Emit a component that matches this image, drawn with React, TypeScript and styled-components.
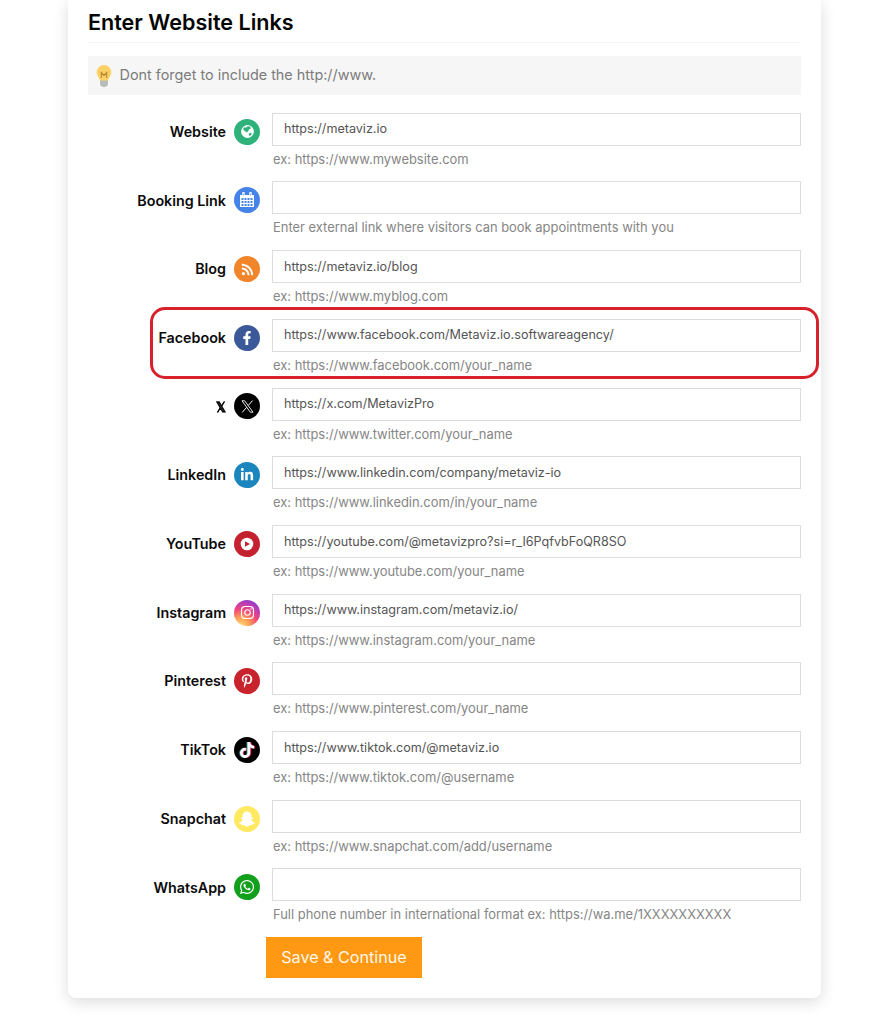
import React from 'react';
import styled, { createGlobalStyle } from 'styled-components';
import { FaRss, FaFacebookF, FaLinkedinIn, FaPinterestP, FaTiktok, FaSnapchatGhost, FaWhatsapp, FaInstagram } from 'react-icons/fa';

const GlobalStyle = createGlobalStyle`
  * { box-sizing: border-box; }
  body { margin: 0; background: #fff; font-family: Inter, "Liberation Sans", sans-serif; height: 1024px; overflow: hidden; }
`;

const Card = styled.main`
  width: 753px;
  height: 997.5px;
  margin-left: 68px;
  padding: 0 20px;
  background: #fff;
  border-radius: 0 0 8px 8px;
  box-shadow: 0 4px 15px rgba(0, 0, 0, 0.14);
`;

const Title = styled.h1`
  margin: 0;
  height: 43px;
  padding-top: 8px;
  border-bottom: 1px solid #f3f4f5;
  font-size: 21.55px;
  line-height: 28px;
  font-weight: 600;
  color: #050505;
`;

const Notice = styled.div`
  display: flex;
  align-items: center;
  gap: 7.5px;
  height: 39px;
  margin: 13px 0 17.8px;
  padding-left: 8px;
  background: #f6f6f6;
  color: #7c7c7c;
  font-size: 14.4px;
  line-height: 17px;

  span { margin-top: -2px; }
`;

const Row = styled.div`
  position: relative;
  display: grid;
  grid-template-columns: 138px 26px 529px;
  column-gap: 8px;
  height: 68.7px;
`;

const Label = styled.label`
  padding-top: 9.2px;
  text-align: right;
  white-space: nowrap;
  font-size: 14.3px;
  line-height: 20px;
  font-weight: 600;
  color: #0b0b0b;
`;

const Badge = styled.span<{ $bg: string }>`
  display: flex;
  align-items: center;
  justify-content: center;
  width: 26px;
  height: 26px;
  margin-top: 5.9px;
  border-radius: 50%;
  background: ${(p) => p.$bg};
  color: #fff;
`;

const Field = styled.div`
  margin-left: 4px;
  width: 529px;
`;

const Input = styled.input`
  display: block;
  width: 100%;
  height: 33px;
  padding: 0 11px 0.8px;
  border: 1px solid #dcdcdc;
  border-radius: 0;
  outline: none;
  background: #fff;
  font-family: inherit;
  font-size: 12.58px;
  color: #555;
`;

const Hint = styled.div`
  margin: 5px 0 0 1px;
  line-height: 17px;
  font-size: 12.93px;
  white-space: nowrap;
  color: #868686;
`;

const Highlight = styled.div`
  position: absolute;
  left: 62px;
  top: -12px;
  width: 669px;
  height: 72px;
  border: 3px solid #d8222b;
  border-radius: 15px;
  pointer-events: none;
`;

const Save = styled.button`
  display: block;
  width: 156px;
  height: 41px;
  margin: -0.200px 0 0 178px;
  padding: 0 0 1px;
  border: 0;
  background: #ff9914;
  color: #fff7e8;
  font-family: inherit;
  font-size: 16.15px;
`;

const Bulb = () => (
  <svg width="16" height="24" viewBox="0 0 16 24">
    <path d="M4 16h8v3.500c0 2-1.500 3.500-4 3.500s-4-1.500-4-3.500z" fill="#b9bdb8" />
    <path d="M8 1a7.300 7.300 0 0 0-7.300 7.300c0 3.500 2.500 5 3.300 8.200h8c.800-3.200 3.300-4.700 3.300-8.200A7.300 7.300 0 0 0 8 1z" fill="#fdd165" />
    <path d="M5.300 14V8.500L8 11.500l2.700-3V14" fill="none" stroke="#b98a35" strokeWidth="1.200" />
  </svg>
);

const Globe = () => (
  <svg width="13" height="13" viewBox="0 0 13 13">
    <circle cx="6.500" cy="6.500" r="6.400" fill="#fff" />
    <path d="M3.200 2.200 5 2.800 6.700 1.300 9.200 1.600 9.800 3.500 8 4.600 6.800 6.600 5.600 7.600 4.300 6.300 2.600 5.200 2.200 3.500z" fill="#2eb17b" />
    <path d="M7.600 8.800 9.300 7.800l1.500.8-.9 1.600-1.600.8z" fill="#2eb17b" />
  </svg>
);

const Calendar = () => (
  <svg width="16" height="16" viewBox="0 0 16 16">
    <path d="M1 3h14v12H1z" fill="#fff" />
    <path d="M4.500 1v3M11.500 1v3" stroke="#fff" strokeWidth="2.400" strokeLinecap="round" />
    <path d="M4.500 1.500v2M11.500 1.500v2" stroke="#4683e8" strokeWidth=".6" />
    {[6, 9, 12].map((y) => [2.5, 5.5, 8.5, 11.5].map((x) => (
      <rect key={`${x}-${y}`} x={x} y={y} width="2" height="2" fill="#4683e8" />
    )))}
  </svg>
);

const Play = () => (
  <svg width="14" height="14" viewBox="0 0 14 14">
    <circle cx="7" cy="7" r="6.300" fill="#fff" />
    <path d="M5 4.200v5.600L10 7z" fill="#c5222f" />
  </svg>
);

const XLogo = () => (
  <svg width="13" height="13" viewBox="0 0 13 13" fill="none" stroke="#fff">
    <path d="M1 .8h2.700l8.300 11.400H9.300z" strokeWidth=".9" />
    <path d="M11.600.6 7.300 5.400M5.700 7.400 1.200 12.400" strokeWidth="1" />
  </svg>
);

const XLabel = styled.span`
  display: inline-block;
  font-weight: 700;
  font-size: 13.5px;
  line-height: 18px;
  transform: scaleX(0.88);
  transform-origin: right;
  -webkit-text-stroke: 0.3px #0b0b0b;
`;

const TikTokGlyph = styled(FaTiktok)`
  filter: drop-shadow(-0.5px 0 0 rgba(37, 244, 238, 0.5)) drop-shadow(1px 0.5px 0 #fe2c55);
`;

const instagramBg = 'radial-gradient(circle at 25% 105%, #ffd776 5%, #ff9b55 30%, #f0437d 55%, #b43bbd 75%, #5b45d6 100%)';

type Link = { name: string; label?: React.ReactNode; bg: string; icon: React.ReactNode; value: string; hint: string; marked?: boolean };

const links: Link[] = [
  { name: 'Website', bg: '#2eb17b', icon: <Globe />, value: 'https://metaviz.io', hint: 'ex: https://www.mywebsite.com' },
  { name: 'Booking Link', bg: '#4683e8', icon: <Calendar />, value: '', hint: 'Enter external link where visitors can book appointments with you' },
  { name: 'Blog', bg: '#f28529', icon: <FaRss size={13} />, value: 'https://metaviz.io/blog', hint: 'ex: https://www.myblog.com' },
  { name: 'Facebook', bg: '#3b5998', icon: <FaFacebookF size={14} />, value: 'https://www.facebook.com/Metaviz.io.softwareagency/', hint: 'ex: https://www.facebook.com/your_name', marked: true },
  { name: 'X', label: <XLabel>𝕏</XLabel>, bg: '#000', icon: <XLogo />, value: 'https://x.com/MetavizPro', hint: 'ex: https://www.twitter.com/your_name' },
  { name: 'LinkedIn', bg: '#1b85bd', icon: <FaLinkedinIn size={14} />, value: 'https://www.linkedin.com/company/metaviz-io', hint: 'ex: https://www.linkedin.com/in/your_name' },
  { name: 'YouTube', bg: '#c5222f', icon: <Play />, value: 'https://youtube.com/@metavizpro?si=r_I6PqfvbFoQR8SO', hint: 'ex: https://www.youtube.com/your_name' },
  { name: 'Instagram', bg: instagramBg, icon: <FaInstagram size={15} />, value: 'https://www.instagram.com/metaviz.io/', hint: 'ex: https://www.instagram.com/your_name' },
  { name: 'Pinterest', bg: '#c9232d', icon: <FaPinterestP size={14} />, value: '', hint: 'ex: https://www.pinterest.com/your_name' },
  { name: 'TikTok', bg: '#000', icon: <TikTokGlyph size={16} />, value: 'https://www.tiktok.com/@metaviz.io', hint: 'ex: https://www.tiktok.com/@username' },
  { name: 'Snapchat', bg: '#fee960', icon: <FaSnapchatGhost size={16} />, value: '', hint: 'ex: https://www.snapchat.com/add/username' },
  { name: 'WhatsApp', bg: '#12a01c', icon: <FaWhatsapp size={16} />, value: '', hint: 'Full phone number in international format ex: https://wa.me/1XXXXXXXXXX' },
];

export default function App() {
  return (
    <>
      <GlobalStyle />
      <Card>
        <Title>Enter Website Links</Title>
        <Notice><Bulb /><span>Dont forget to include the http://www.</span></Notice>
        {links.map((link) => (
          <Row key={link.name}>
            <Label>{link.label ?? link.name}</Label>
            <Badge $bg={link.bg}>{link.icon}</Badge>
            <Field>
              <Input defaultValue={link.value} />
              <Hint>{link.hint}</Hint>
            </Field>
            {link.marked && <Highlight />}
          </Row>
        ))}
        <Save>Save &amp; Continue</Save>
      </Card>
    </>
  );
}
